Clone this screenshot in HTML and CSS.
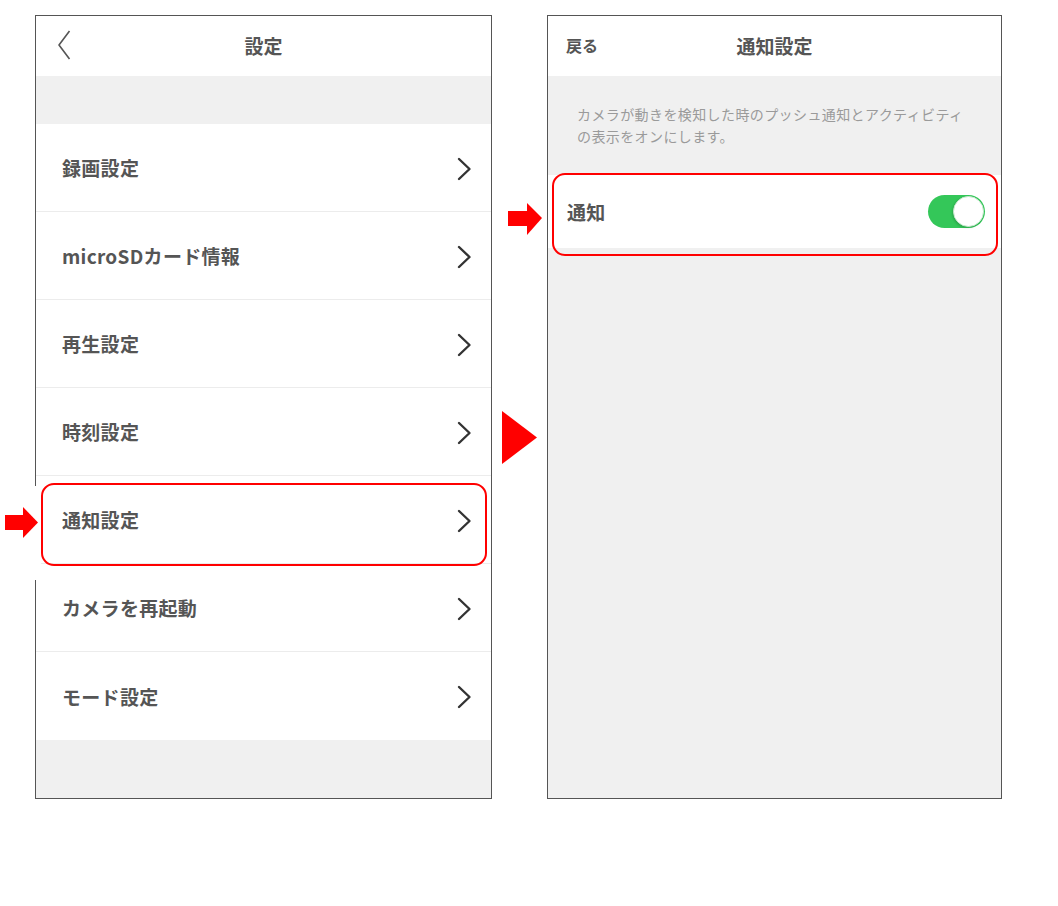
FILE: index.html
```html
<!DOCTYPE html>
<html lang="ja">
<head>
  <meta charset="UTF-8">
  <meta name="viewport" content="width=device-width, initial-scale=1.0">
  <title>設定 / 通知設定</title>
  <link rel="stylesheet" href="styles.css">
</head>
<body>
  <div class="page">
    <!-- settings menu -->
    <section class="phone phone-left">
      <header class="bar">
        <span class="back-icon">
          <svg width="14" height="30" viewBox="0 0 14 30"><path d="M12.5 1 L2 15 L12.5 29" fill="none" stroke="#555" stroke-width="1.6" stroke-linejoin="round"/></svg>
        </span>
        <h1 class="title">設定</h1>
        <span></span>
      </header>
      <div class="spacer"></div>
      <ul class="menu">
        <li class="row">録画設定<svg class="chev" viewBox="0 0 15 24"><path d="M2 2 L12.5 12 L2 22"/></svg></li>
        <li class="row">microSDカード情報<svg class="chev" viewBox="0 0 15 24"><path d="M2 2 L12.5 12 L2 22"/></svg></li>
        <li class="row">再生設定<svg class="chev" viewBox="0 0 15 24"><path d="M2 2 L12.5 12 L2 22"/></svg></li>
        <li class="row">時刻設定<svg class="chev" viewBox="0 0 15 24"><path d="M2 2 L12.5 12 L2 22"/></svg></li>
        <li class="row">通知設定<svg class="chev" viewBox="0 0 15 24"><path d="M2 2 L12.5 12 L2 22"/></svg></li>
        <li class="row">カメラを再起動<svg class="chev" viewBox="0 0 15 24"><path d="M2 2 L12.5 12 L2 22"/></svg></li>
        <li class="row">モード設定<svg class="chev" viewBox="0 0 15 24"><path d="M2 2 L12.5 12 L2 22"/></svg></li>
      </ul>
      <div class="fill"></div>

      <div class="mark mark-left"></div>
      <div class="pointer pointer-left">
        <svg width="33" height="31" viewBox="0 0 33 31"><rect x="0" y="8" width="19" height="15" fill="#f00"/><polygon points="18,0 33,15.5 18,31" fill="#f00"/></svg>
      </div>
    </section>

    <div class="step">
      <svg width="35" height="53" viewBox="0 0 35 53"><polygon points="0,0 35,26.5 0,53" fill="#f00"/></svg>
    </div>

    <!-- notification settings -->
    <section class="phone phone-right">
      <header class="bar">
        <span class="back-text">戻る</span>
        <h1 class="title">通知設定</h1>
        <span></span>
      </header>
      <p class="note">カメラが動きを検知した時のプッシュ通知とアクティビティの表示をオンにします。</p>
      <div class="row row-switch">
        通知
        <span class="switch"><span class="knob"></span></span>
      </div>
      <div class="fill"></div>

      <div class="mark mark-right"></div>
      <div class="pointer pointer-right">
        <svg width="34" height="32" viewBox="0 0 34 32"><rect x="0" y="8" width="20" height="15" fill="#f00"/><polygon points="19,0 34,15 19,32" fill="#f00"/></svg>
      </div>
    </section>
  </div>
</body>
</html>
```

FILE: styles.css
```css
body {
  margin: 0;
  background: #fff;
  font-family: "Noto Sans CJK JP", "Noto Sans", sans-serif;
  color: #555;
}
.page {
  display: flex;
  align-items: flex-start;
  padding: 15px 0 0 35px;
}
.phone {
  position: relative;
  box-sizing: border-box;
  height: 784px;
  border: 1px solid #555;
  background: #f0f0f0;
  display: flex;
  flex-direction: column;
}
.phone-left { width: 457px; }
.phone-right { width: 455px; }

.bar {
  height: 60px;
  padding-bottom: 2px;
  box-sizing: border-box;
  background: #fff;
  display: grid;
  grid-template-columns: 1fr auto 1fr;
  align-items: center;
  flex-shrink: 0;
}
.title {
  margin: 0;
  font-size: 19px;
  font-weight: 700;
  color: #555;
}
.back-icon {
  padding-left: 21px;
  display: flex;
  align-items: center;
}
.back-text {
  padding-left: 18px;
  font-size: 16px;
  font-weight: 700;
}

.spacer { height: 48px; flex-shrink: 0; }
.menu {
  list-style: none;
  margin: 0;
  padding: 0;
  background: #fff;
}
.row {
  box-sizing: border-box;
  height: 88px;
  display: flex;
  align-items: center;
  justify-content: space-between;
  padding: 0 19px 0 26px;
  font-size: 19px;
  font-weight: 700;
  letter-spacing: 0.3px;
  border-bottom: 1px solid #ececec;
}
.menu .row:last-child { border-bottom: none; }
.chev {
  width: 15px;
  height: 24px;
  margin-top: 2px;
  fill: none;
  stroke: #333;
  stroke-width: 2.4;
  stroke-linecap: round;
  stroke-linejoin: round;
}
.fill { flex: 1; }

.note {
  margin: 0;
  padding: 27px 32px 28px 29px;
  font-size: 14px;
  line-height: 22px;
  letter-spacing: 0.4px;
  color: #9a9a9a;
}
.row-switch {
  height: 73px;
  padding: 0 16px 0 19px;
  background: #fff;
  border-bottom: none;
}
.switch {
  position: relative;
  width: 57px;
  height: 33px;
  border-radius: 17px;
  background: #34c759;
}
.knob {
  position: absolute;
  top: 1px;
  right: 1px;
  width: 29px;
  height: 29px;
  border-radius: 50%;
  background: #fff;
  border: 1px solid #c8e8cf;
  box-shadow: -1px 1px 2px rgba(0, 0, 0, 0.15);
}

.step {
  width: 55px;
  display: flex;
  justify-content: center;
  padding-top: 396px;
}

/* red annotation frames and arrows */
.mark {
  position: absolute;
  box-sizing: border-box;
  border: 2px solid #f00;
  border-radius: 13px;
  width: 446px;
  height: 83px;
}
.mark-left { left: 5px; top: 467px; }
.mark-right { left: 4px; top: 157px; }
.pointer {
  position: absolute;
  display: flex;
}
.pointer-left {
  left: -36px;
  top: 470px;
  width: 41px;
  height: 94px;
  background: #fff;
  padding: 21px 0 0 5px;
  box-sizing: border-box;
}
.pointer-right {
  left: -40px;
  top: 187px;
}
```
